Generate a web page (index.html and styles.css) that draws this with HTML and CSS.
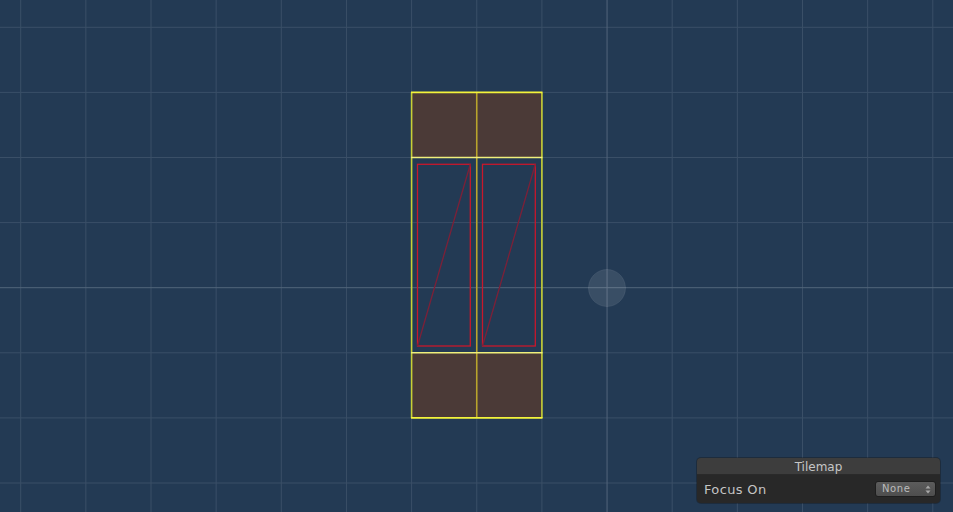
FILE: index.html
```html
<!DOCTYPE html>
<html>
<head>
<meta charset="utf-8">
<link rel="stylesheet" href="styles.css">
</head>
<body>
<div class="scene">
  <svg class="canvas" width="953" height="512" viewBox="0 0 953 512" xmlns="http://www.w3.org/2000/svg">
    <g class="grid" stroke="#3a4f67" stroke-width="1">
      <line x1="20.7" y1="0" x2="20.7" y2="512"/>
      <line x1="85.85" y1="0" x2="85.85" y2="512"/>
      <line x1="151" y1="0" x2="151" y2="512"/>
      <line x1="216.15" y1="0" x2="216.15" y2="512"/>
      <line x1="281.3" y1="0" x2="281.3" y2="512"/>
      <line x1="346.45" y1="0" x2="346.45" y2="512"/>
      <line x1="411.6" y1="0" x2="411.6" y2="512"/>
      <line x1="476.75" y1="0" x2="476.75" y2="512"/>
      <line x1="541.9" y1="0" x2="541.9" y2="512"/>
      <line x1="672.2" y1="0" x2="672.2" y2="512"/>
      <line x1="737.35" y1="0" x2="737.35" y2="512"/>
      <line x1="802.5" y1="0" x2="802.5" y2="512"/>
      <line x1="867.65" y1="0" x2="867.65" y2="512"/>
      <line x1="932.8" y1="0" x2="932.8" y2="512"/>
      <line x1="0" y1="27.3" x2="953" y2="27.3"/>
      <line x1="0" y1="92.4" x2="953" y2="92.4"/>
      <line x1="0" y1="157.5" x2="953" y2="157.5"/>
      <line x1="0" y1="222.6" x2="953" y2="222.6"/>
      <line x1="0" y1="352.8" x2="953" y2="352.8"/>
      <line x1="0" y1="417.9" x2="953" y2="417.9"/>
      <line x1="0" y1="483" x2="953" y2="483"/>
    </g>
    <g stroke="#52657a" stroke-width="1">
      <line x1="607.05" y1="0" x2="607.05" y2="512"/>
      <line x1="0" y1="287.7" x2="953" y2="287.7"/>
    </g>
    <circle cx="607" cy="288" r="18.5" fill="#ffffff" fill-opacity="0.1" stroke="#ffffff" stroke-opacity="0.08" stroke-width="1"/>

    <g class="tiles" fill="#4b3a37">
      <rect x="411.6" y="92.4" width="130.3" height="65.1"/>
      <rect x="411.6" y="352.8" width="130.3" height="65.1"/>
    </g>

    <g fill="none" stroke-width="1.3">
      <rect x="417.5" y="164.3" width="52.8" height="181.7" stroke="#c8182c"/>
      <rect x="482.5" y="164.3" width="52.8" height="181.7" stroke="#c8182c"/>
      <line x1="417.5" y1="346" x2="470.3" y2="164.3" stroke="#7c2038"/>
      <line x1="482.5" y1="346" x2="535.3" y2="164.3" stroke="#7c2038"/>
    </g>

    <g fill="none" stroke-width="1.6">
      <line x1="411.6" y1="92.4" x2="411.6" y2="417.9" stroke="#c8d036"/>
      <line x1="541.9" y1="92.4" x2="541.9" y2="417.9" stroke="#c8d036"/>
      <line x1="476.75" y1="92.4" x2="476.75" y2="417.9" stroke="#b8a42c"/>
      <line x1="411" y1="157.5" x2="542.5" y2="157.5" stroke="#f0f07c"/>
      <line x1="411" y1="352.8" x2="542.5" y2="352.8" stroke="#f0f07c"/>
      <line x1="411" y1="92.4" x2="542.5" y2="92.4" stroke="#f4f43a"/>
      <line x1="411" y1="417.9" x2="542.5" y2="417.9" stroke="#f4f43a"/>
    </g>
  </svg>

  <div class="overlay">
    <div class="overlay-title">Tilemap</div>
    <div class="overlay-body">
      <span class="field-label">Focus On</span>
      <div class="popup">
        <span class="popup-text">None</span>
        <svg class="popup-arrows" width="6" height="9" viewBox="0 0 6 9" xmlns="http://www.w3.org/2000/svg">
          <path d="M3 0.5 L5.5 3.5 L0.5 3.5 Z" fill="#a8a8a8"/>
          <path d="M3 8.5 L5.5 5.5 L0.5 5.5 Z" fill="#a8a8a8"/>
        </svg>
      </div>
    </div>
  </div>
</div>
</body>
</html>
```

FILE: styles.css
```css
html, body {
  margin: 0;
  padding: 0;
  background: #233a54;
  overflow: hidden;
}

.scene {
  position: relative;
  width: 953px;
  height: 512px;
  background: #233a54;
  font-family: "DejaVu Sans", "Liberation Sans", sans-serif;
}

.canvas {
  display: block;
}

.overlay {
  position: absolute;
  left: 697px;
  top: 458px;
  width: 243px;
  height: 45px;
  border-radius: 4px;
  overflow: hidden;
  background: #282828;
  box-shadow: 0 0 0 1px rgba(20, 20, 20, 0.35);
  display: flex;
  flex-direction: column;
}

.overlay-title {
  height: 17px;
  background: #3d3d3d;
  color: #c6c6c6;
  font-size: 12px;
  line-height: 18px;
  text-align: center;
  border-bottom: 1px solid #2a2a2a;
  box-sizing: border-box;
}

.overlay-body {
  flex: 1;
  display: flex;
  align-items: center;
  justify-content: space-between;
  padding: 0 4px 0 7px;
}

.field-label {
  color: #c4c4c4;
  font-size: 13px;
  letter-spacing: 0.35px;
}

.popup {
  width: 61px;
  height: 16px;
  box-sizing: border-box;
  border: 1px solid #1e1e1e;
  border-radius: 3px;
  background: linear-gradient(#5c5c5c, #4e4e4e);
  display: flex;
  align-items: center;
  justify-content: space-between;
  padding: 0 4px 0 6px;
}

.popup-text {
  color: #bcbcbc;
  font-size: 10px;
  letter-spacing: 0.6px;
  line-height: 14px;
}

.popup-arrows {
  display: block;
}
```
